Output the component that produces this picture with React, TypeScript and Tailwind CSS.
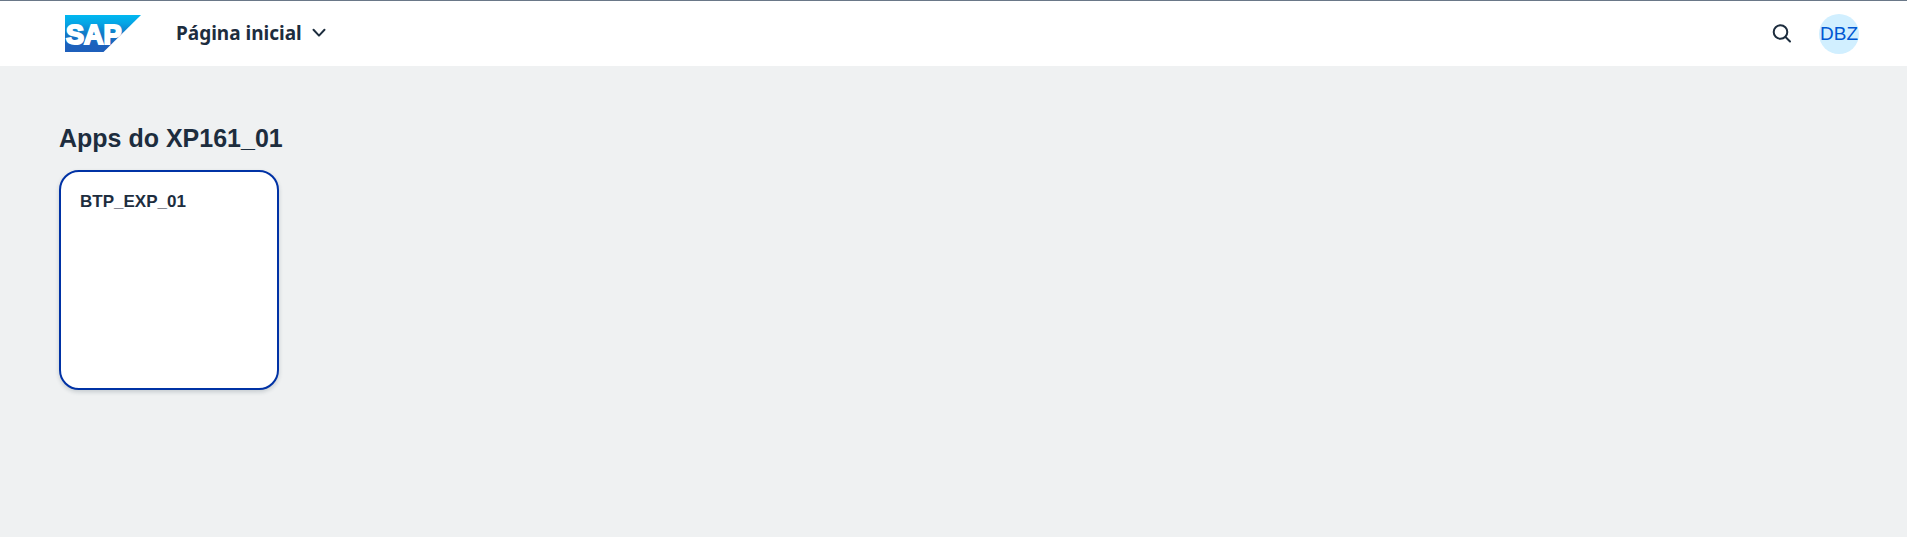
import React from "react";

function SapLogo() {
  return (
    <svg width="76" height="37" viewBox="0 0 76 37" role="img" aria-label="SAP">
      <defs>
        <linearGradient id="sap-blue" x1="0" y1="0" x2="0" y2="1">
          <stop offset="0" stopColor="#00b8f1" />
          <stop offset="0.22" stopColor="#06a5e5" />
          <stop offset="0.5" stopColor="#127ac7" />
          <stop offset="0.8" stopColor="#1d61bc" />
          <stop offset="1" stopColor="#1e5fbb" />
        </linearGradient>
      </defs>
      <path d="M0 37h38.500L76 0H0z" fill="url(#sap-blue)" />
      <text
        x="1"
        y="29"
        fill="#fff"
        stroke="#fff"
        strokeWidth="2"
        fontFamily="'Liberation Sans', Arial, sans-serif"
        fontWeight="700"
        fontSize="27"
      >
        SAP
      </text>
    </svg>
  );
}

function ChevronIcon() {
  return (
    <svg width="14" height="10" viewBox="0 0 14 10" fill="none" aria-hidden="true">
      <path d="M1.500 1.800 7 7.600l5.500-5.800" stroke="#1d2d3e" strokeWidth="2" strokeLinecap="round" strokeLinejoin="round" />
    </svg>
  );
}

function SearchIcon() {
  return (
    <svg width="20" height="20" viewBox="0 0 20 20" fill="none" aria-hidden="true">
      <circle cx="8.500" cy="8" r="6.800" stroke="#1d2d3e" strokeWidth="2" />
      <path d="m13.500 13 4.500 4.500" stroke="#1d2d3e" strokeWidth="2" strokeLinecap="round" />
    </svg>
  );
}

function ShellHeader() {
  return (
    <header className="flex h-[66px] items-center justify-between border-t border-[#6a7888] bg-white pr-12 pl-[65px]">
      <div className="flex items-center gap-[35px]">
        <a href="#home">
          <SapLogo />
        </a>
        <button type="button" className="flex items-center gap-2.5 pb-0.5 font-['Noto_Sans','Open_Sans',sans-serif] text-[19px]/7 font-bold">
          Página inicial
          <ChevronIcon />
        </button>
      </div>
      <div className="flex items-center gap-[27px]">
        <button type="button" aria-label="Pesquisar">
          <SearchIcon />
        </button>
        <button type="button" className="flex size-10 items-center justify-center rounded-full bg-[#d1efff] pt-0.5 text-[19px] text-[#0057d2]">
          DBZ
        </button>
      </div>
    </header>
  );
}

export default function App() {
  return (
    <div className="min-h-screen bg-[#eff1f2] font-['Liberation_Sans',Arial,sans-serif] text-[#1d2d3e]">
      <ShellHeader />
      <main className="px-[59px] pt-14">
        <h2 className="text-[25px]/8 font-bold">Apps do XP161_01</h2>
        <a
          href="#BTP_EXP_01"
          className="mt-4 block size-[220px] rounded-[20px] border-2 border-[#0032a5] bg-white px-[19px] py-4 shadow-[0_2px_4px_rgba(34,53,72,0.2)]"
        >
          <h3 className="text-[17px]/7 font-bold">BTP_EXP_01</h3>
        </a>
      </main>
    </div>
  );
}
